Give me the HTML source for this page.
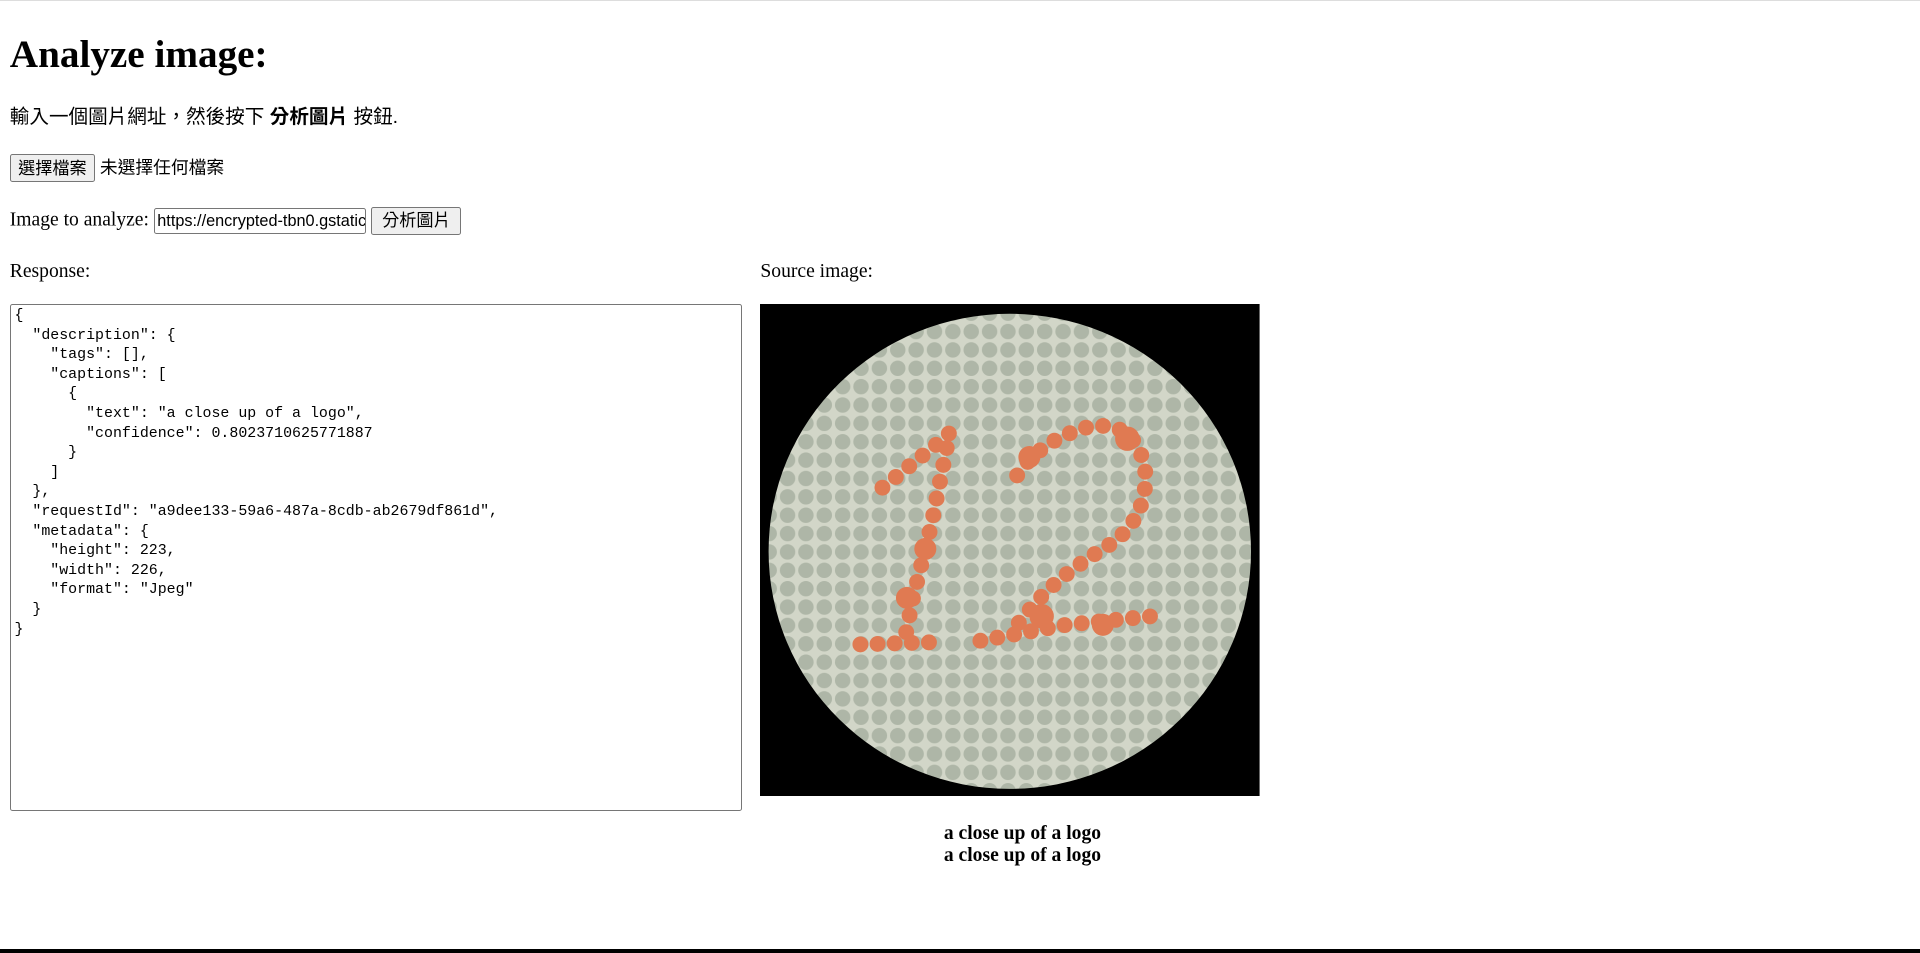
<!DOCTYPE html>
<html><head><meta charset="utf-8">
<style>
html,body{margin:0;padding:0;background:#fff}
body{zoom:1.2245;font-family:"Liberation Serif","Noto Serif CJK SC",serif;font-size:16px;color:#000;width:1568px;height:778px;position:relative;overflow:hidden}
.top{position:absolute;left:0;top:0;width:1568px;height:1px;background:#ddd}
.bot{position:absolute;left:0;top:775px;width:1568px;height:3px;background:#000}
h1{position:absolute;left:8px;top:25px;margin:0;font-size:32px;font-weight:bold;line-height:40px}
.p{position:absolute;left:8px;font-size:16px;line-height:20px}
.cjk{font-family:"Liberation Sans","Noto Sans CJK TC",sans-serif;font-size:16px}
.btn{display:inline-block;font-family:"Liberation Sans","Noto Sans CJK TC",sans-serif;font-size:14px;background:#efefef;border:1px solid #767676;border-radius:2px;padding:1px 6px;line-height:19px;vertical-align:middle}
.inp{display:inline-block;font-family:"Liberation Sans",sans-serif;font-size:13.3px;border:1px solid #767676;border-radius:2px;padding:1px 2px;width:168px;height:18px;line-height:18px;overflow:hidden;white-space:nowrap;vertical-align:middle}
.ta{position:absolute;left:8px;top:248px;width:598px;height:414px;border:1px solid #767676;border-radius:2px;margin:0;padding:2px 3px;box-sizing:border-box;font-family:"Liberation Mono",monospace;font-size:12.2px;line-height:16px;white-space:pre;overflow:hidden}
.cap{position:absolute;left:621px;width:428px;text-align:center;font-weight:bold;font-size:16px;line-height:18px}
</style></head><body>
<div class="top"></div>
<h1>Analyze image:</h1>
<div class="p cjk" style="top:86px">輸入一個圖片網址，然後按下 <b>分析圖片</b> 按鈕.</div>
<div class="p" style="top:126px"><span class="btn">選擇檔案</span> <span class="cjk" style="font-size:14.5px;vertical-align:middle">未選擇任何檔案</span></div>
<div class="p" style="top:169px">Image to analyze: <span class="inp">https://encrypted-tbn0.gstatic.com/images</span> <span class="btn" style="padding:1px 8px">分析圖片</span></div>
<div class="p" style="top:212px">Response:</div>
<div class="p" style="top:212px;left:621px">Source image:</div>
<pre class="ta">{
  "description": {
    "tags": [],
    "captions": [
      {
        "text": "a close up of a logo",
        "confidence": 0.8023710625771887
      }
    ]
  },
  "requestId": "a9dee133-59a6-487a-8cdb-ab2679df861d",
  "metadata": {
    "height": 223,
    "width": 226,
    "format": "Jpeg"
  }
}</pre>
<svg style="position:absolute;left:621px;top:248px" width="408" height="402" viewBox="0 0 408 402">
<defs>
<pattern id="d" width="15" height="15" patternUnits="userSpaceOnUse">
<rect width="15" height="15" fill="#d2d6c8"/>
<circle cx="7.5" cy="7.5" r="6.3" fill="#aeb6a7"/>
</pattern>
</defs>
<rect width="408" height="402" fill="#000"/>
<ellipse cx="204" cy="202" rx="197" ry="194" fill="url(#d)"/>
<g fill="none" stroke="#e07a52" stroke-linecap="round" stroke-width="13" stroke-dasharray="0 14">
<path d="M100 150 L150 110 L155 105 L140 180 L125 240 L118 275"/>
<path d="M82 278 L150 276"/>
<path d="M210 140 Q230 110 270 100 Q310 95 315 140 Q315 180 280 200 Q240 225 220 250 L205 268"/>
<path d="M180 275 L250 262 L320 255"/>
</g>
<g fill="#e07a52">
<circle cx="220" cy="125" r="9"/><circle cx="300" cy="110" r="10"/><circle cx="135" cy="200" r="9"/><circle cx="230" cy="255" r="10"/><circle cx="120" cy="240" r="9"/><circle cx="280" cy="262" r="9"/>
</g>
</svg>
<div class="cap" style="top:672px">a close up of a logo</div>
<div class="cap" style="top:690px">a close up of a logo</div>
<div class="bot"></div>
</body></html>
